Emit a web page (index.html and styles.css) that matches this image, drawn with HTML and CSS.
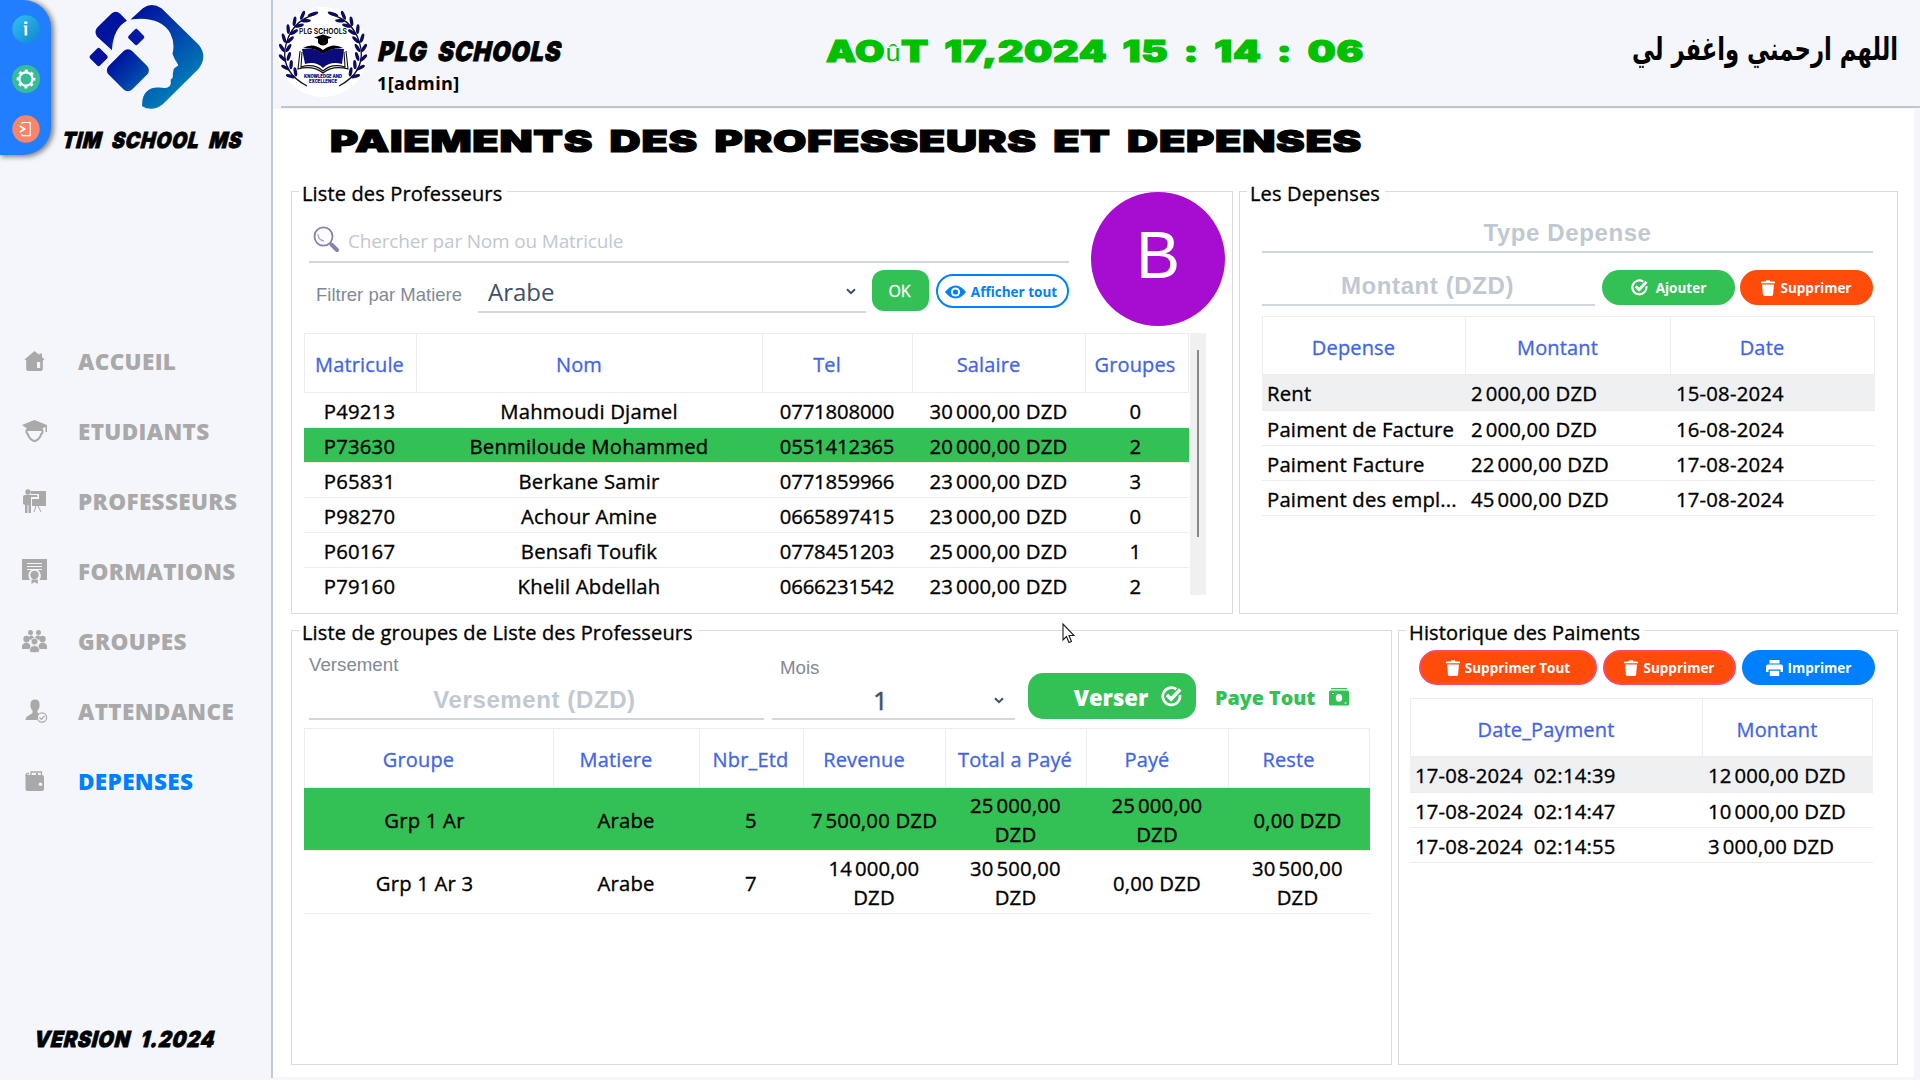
FILE: index.html
```html
<!DOCTYPE html>
<html lang="fr">
<head>
<meta charset="utf-8">
<title>Paiements des professeurs et depenses</title>
<link rel="stylesheet" href="styles.css">
</head>
<body>
<svg class="defs" width="0" height="0">
  <defs>
    <symbol id="trash" viewBox="0 0 14 16"><path fill="#fff" d="M0 2.2Q0 1.5 1 1.5H4.6L5.2.3H8.8L9.4 1.5H13Q14 1.5 14 2.2V3.2H0ZM1 4.4H13L12.1 14.6Q12 16 10.8 16H3.2Q2 16 1.9 14.6Z"/></symbol>
    <symbol id="check" viewBox="0 0 20 20"><path fill="none" stroke="#fff" stroke-width="2.6" d="M14.5 3A8.2 8.2 0 1 0 18 8.5"/><path fill="none" stroke="#fff" stroke-width="3.4" d="M5.6 8.6L9.6 12.6L18.2 3.2"/></symbol>
    <symbol id="chev" viewBox="0 0 10 7"><path fill="none" stroke="#3e5068" stroke-width="2" d="M1 1.2L5 5.2L9 1.2"/></symbol>
  </defs>
</svg>
<div class="app">
  <aside class="sidebar">
    <div class="brand">
      <div class="dock">
        <svg width="28" height="28" viewBox="0 0 28 28"><defs><linearGradient id="gi" x1="0" y1="0" x2="1" y2="1"><stop offset="0" stop-color="#33c1f2"/><stop offset="1" stop-color="#0f86cd"/></linearGradient></defs><circle cx="14" cy="14" r="13.7" fill="url(#gi)"/><path fill="#fff" d="M12.3 6.5h3v2.6h-3zM11.8 10.5h3.4v10h-2.6v-8.6h-.8z"/></svg>
        <svg width="28" height="28" viewBox="0 0 28 28"><circle cx="14" cy="14" r="14" fill="#37bc9b"/><circle cx="14" cy="14" r="6.6" fill="none" stroke="#fff" stroke-width="2.2"/><circle cx="14" cy="14" r="8.2" fill="none" stroke="#fff" stroke-width="2.4" stroke-dasharray="3 3.44" stroke-dashoffset="1.5"/></svg>
        <svg width="28" height="28" viewBox="0 0 28 28"><circle cx="14" cy="14" r="13.7" fill="#fc8468"/><path fill="none" stroke="#fff" stroke-width="1.2" d="M10 9V7.5H18.2V20.7H10V19"/><path fill="none" stroke="#fff" stroke-width="1.7" d="M8 11L12.5 14L8 17"/></svg>
      </div>
      <div class="brand-id">
        <svg class="brand-logo" width="118" height="109" viewBox="265 5 355 327"><defs><linearGradient id="lg" gradientUnits="userSpaceOnUse" x1="370" y1="70" x2="540" y2="270"><stop offset="0" stop-color="#00139f"/><stop offset="1" stop-color="#007ab8"/></linearGradient></defs>
          <g fill="url(#lg)"><path d="M393 57L430 23Q456 4 486 23L598 133Q626 168 598 205L490 312Q458 336 428 318Q426 290 440 275Q455 260 480 262Q512 268 514 250L514 238Q522 235 520 222L523 205L537 195Q524 175 519 160Q528 130 512 97Q480 45 393 57Z"/><path d="M292 82L335 40Q348 28 362 40L382 61Q340 85 337 150L292 108Q283 95 292 82Z"/></g>
          <rect x="391" y="91" width="38" height="38" rx="6" fill="#0519a2" transform="rotate(45 410 110)"/>
          <rect x="276" y="149" width="42" height="42" rx="6" fill="#00139f" transform="rotate(45 297 170)"/>
          <defs><linearGradient id="ld" x1="0" y1="0" x2="1" y2="0"><stop offset="0" stop-color="#00139f"/><stop offset="1" stop-color="#0050ad"/></linearGradient></defs>
          <rect x="335" y="160" width="100" height="100" rx="18" fill="url(#ld)" transform="rotate(45 385 210)"/></svg>
        <svg class="display" width="184" height="28" viewBox="0 0 184 28"><text class="slant" x="4" y="20" transform="skewX(-14)" textLength="180" lengthAdjust="spacingAndGlyphs">TIM SCHOOL MS</text></svg>
      </div>
    </div>
    <nav class="nav">
      <a><svg viewBox="0 0 26 26"><path d="M2.5 11.5L12.5 3L17.5 7V5.5H20V9L22.5 11.5L20.8 12.6V21Q20.8 23 19 23H6Q4.200 23 4.200 21V12.600Z"/><path fill="#f4f6fb" d="M15 14h3.200v6H15z"/></svg>ACCUEIL</a>
      <a><svg viewBox="0 0 26 26"><path d="M0 7L12.500 2L25 7V14H23.500V9L20 10.500V13H5V10.500Z"/><path fill="none" stroke="#a9a9a9" stroke-width="2" d="M6 11Q4 12 4.500 14.500Q6 16 7 19Q12.500 27 18 19Q19 16 20.500 14.500Q21 12 19 11"/></svg>ETUDIANTS</a>
      <a><svg viewBox="0 0 26 26"><circle cx="6" cy="4" r="2.700"/><path d="M1 9Q1 7 3 7H14Q16 7 15.500 9H9V25H6.500V17H5.500V25H3V17L1 16Z"/><path d="M9 3H24V18H10V11H17V6H9Z"/><path fill="none" stroke="#a9a9a9" d="M14 18L12 24M16 18L19 24"/></svg>PROFESSEURS</a>
      <a><svg viewBox="0 0 26 26"><path d="M0 1H25V22H17.500A6 6 0 1 0 8 22H0Z"/><path stroke="#f4f6fb" d="M5 5.500H20M5 8.500H20M5 11.500H20"/><circle cx="12.500" cy="17" r="6" fill="#f4f6fb"/><circle cx="12.500" cy="17" r="4.200"/><path d="M9.500 21.500H15.800V26L12.600 24L9.500 26Z"/></svg>FORMATIONS</a>
      <a><svg viewBox="0 0 26 26"><circle cx="8.500" cy="4.500" r="2.500"/><circle cx="16.500" cy="4.500" r="2.500"/><path d="M6 10L8.500 7.500H10L12.500 10L15 7.500H17L19 10L16 12H9Z"/><circle cx="4.500" cy="11" r="3.200"/><circle cx="20.500" cy="11" r="3.200"/><path d="M0 21V18Q1 14.500 4.500 14.500Q8 15 8.500 18V21ZM16.500 21V18Q17.500 14.500 20.500 14.500Q24 14.500 25 18V21Z"/><g stroke="#f4f6fb" stroke-width=".8"><circle cx="12.500" cy="13.500" r="3.400"/><path d="M7.500 24V21.500Q8 17.500 12.500 17.500Q17 17.500 17.500 21.500V24Q12.500 25.500 7.500 24Z"/></g></svg>GROUPES</a>
      <a><svg viewBox="0 0 26 26"><path d="M8.500 6Q8.500 1.500 13 1.500Q17.500 1.500 17.500 6Q18 10 15.500 12.500V14.500L17 16Q14.500 18 15 22H3.500Q4 18.500 6 18L10.500 15V12.500Q8 10 8.500 6Z"/><circle cx="20" cy="19.500" r="4.600" fill="none" stroke="#a9a9a9" stroke-width="1.200"/><path fill="none" stroke="#a9a9a9" stroke-width="1.300" d="M17.500 19.500L19.500 21.300L22.500 17.800"/></svg>ATTENDANCE</a>
      <a class="on"><svg viewBox="0 0 26 26"><path d="M3.500 7H20Q22 7 22 9V21Q22 23 20 23H5.500Q3.500 23 3.500 21Z"/><path fill="none" stroke="#a9a9a9" stroke-width="1.300" d="M4.200 8V6.500Q4.200 5.500 6 5.500H7M9 8V4H19.500V8"/><path d="M14 5h2v3h-2z"/><circle cx="18.500" cy="16.200" r="1.800" fill="#f4f6fb"/></svg>DEPENSES</a>
    </nav>
    <svg class="display version" width="190" height="28" viewBox="0 0 190 28"><text class="slant" x="6" y="20" transform="skewX(-14)" textLength="181" lengthAdjust="spacingAndGlyphs">VERSION 1.2024</text></svg>
  </aside>

  <main class="main">
    <header class="top">
      <svg class="crest" width="92" height="92" viewBox="-1 -1 92 92">
        <defs><g id="pair"><ellipse cx="4" cy="41" rx="1.700" ry="4.800" transform="rotate(-32 4 41)" fill="#0b0b66"/><ellipse cx="10.500" cy="41" rx="1.700" ry="4.600" transform="rotate(32 10.500 41)" fill="#0b0b66"/></g>
        <g id="branch"><path fill="none" stroke="#111" stroke-width="1.300" d="M29 79Q4 66 7 42Q12 14 38 7"/><use href="#pair" transform="rotate(-42 45 44)"/><use href="#pair" transform="rotate(-28 45 44)"/><use href="#pair" transform="rotate(-14 45 44)"/><use href="#pair"/><use href="#pair" transform="rotate(14 45 44)"/><use href="#pair" transform="rotate(28 45 44)"/><use href="#pair" transform="rotate(42 45 44)"/><use href="#pair" transform="rotate(56 45 44)"/><ellipse cx="35" cy="7" rx="5.500" ry="1.700" fill="#0b0b66" transform="rotate(-18 35 7)"/></g></defs>
        <circle cx="45" cy="45" r="45" fill="#fff"/>
        <use href="#branch"/><use href="#branch" transform="matrix(-1 0 0 1 90 0)"/>
        <text x="21" y="27" font-size="7.500" textLength="48" lengthAdjust="spacingAndGlyphs" class="crest-t">PLG SCHOOLS</text>
        <path d="M36 30.500L45 27.500L54 30.500L45 33.500ZM40 32H50V36Q45 41 40 36Z"/>
        <path d="M25 41Q35 35 45 43Q55 35 65 41Q54 40 45 47Q36 40 25 41Z"/>
        <path fill="none" stroke="#111" stroke-width="1.100" d="M22 44L20 62Q35 58 45 66Q55 58 70 62L68 44M24 45L23 60Q36 56 45 64Q54 56 67 60L66 45"/>
        <path fill="#0b0b7a" d="M24 42Q37 40 45 47Q53 40 66 42L64 57Q52 54 45 61Q38 54 27 57Z"/>
        <text x="26" y="70.500" font-size="4.600" textLength="38" lengthAdjust="spacingAndGlyphs" class="crest-b">KNOWLEDGE AND</text>
        <text x="31" y="75.500" font-size="4.600" textLength="28" lengthAdjust="spacingAndGlyphs" class="crest-b">EXCELLENCE</text>
      </svg>
      <div class="school">
        <svg class="display" width="192" height="30" viewBox="0 0 192 30"><text class="slant big" x="5" y="23" transform="skewX(-12)" textLength="183" lengthAdjust="spacingAndGlyphs">PLG SCHOOLS</text></svg>
        <span class="user">1[admin]</span>
      </div>
      <svg class="display clock" width="540" height="36" viewBox="0 0 540 36"><g fill="#00c000"><text class="wide green" x="0" y="29" textLength="59" lengthAdjust="spacingAndGlyphs">AO</text><text class="thin" x="59.500" y="28" textLength="15" lengthAdjust="spacingAndGlyphs">û</text><text class="wide green" x="75" y="29" textLength="463" lengthAdjust="spacingAndGlyphs">T 17,2024 15 : 14 : 06</text></g></svg>
      <svg class="display prayer" width="276" height="84" viewBox="0 0 276 84"><text class="arabic" x="270" y="52" direction="rtl" textLength="266" lengthAdjust="spacingAndGlyphs">اللهم ارحمني واغفر لي</text></svg>
    </header>
    <section class="page">
      <h1><svg class="display" width="1036" height="34" viewBox="0 0 1036 34"><text class="wide" x="0" y="28" textLength="1032" lengthAdjust="spacingAndGlyphs">PAIEMENTS DES PROFESSEURS ET DEPENSES</text></svg></h1>
      <div class="row r1">
        <section class="panel profs">
          <h2>Liste des Professeurs</h2>
          <div class="finder">
            <div class="finder-l">
              <div class="search"><svg width="27" height="27" viewBox="0 0 27 27"><ellipse cx="10.500" cy="10.500" rx="9" ry="9.200" fill="#fdfdff" stroke="#8783a8" stroke-width="1.800"/><path fill="none" stroke="#a9a6c4" stroke-width="1.300" d="M5 8Q5 14 11 15"/><path stroke="#8783a8" stroke-width="4" stroke-linecap="round" d="M18.500 18.500L24 24"/></svg><span>Chercher par Nom ou Matricule</span></div>
              <div class="filter">
                <label>Filtrer par Matiere</label>
                <div class="select sel-m"><span>Arabe</span><svg width="10" height="7"><use href="#chev"/></svg></div>
                <button class="ok">OK</button>
                <button class="pill line"><svg width="21" height="14" viewBox="0 0 21 14"><path fill="#0080ff" d="M0 7Q5 .5 10.500 .5Q16 .5 21 7Q16 13.500 10.500 13.500Q5 13.500 0 7Z"/><circle cx="10.500" cy="7" r="4.600" fill="#fff"/><circle cx="10.500" cy="7" r="2.600" fill="#0080ff"/></svg>Afficher tout</button>
              </div>
            </div>
            <div class="avatar">B</div>
          </div>
          <div class="scroll">
            <table class="t1">
              <colgroup><col style="width:113px"><col style="width:346px"><col style="width:150px"><col style="width:173px"><col style="width:103px"></colgroup>
              <tr><th>Matricule</th><th class="s">Nom</th><th class="s">Tel</th><th class="s">Salaire</th><th>Groupes</th></tr>
              <tr><td>P49213</td><td>Mahmoudi Djamel</td><td class="tel">0771808000</td><td>30&#8239;000,00 DZD</td><td>0</td></tr>
              <tr class="sel"><td>P73630</td><td>Benmiloude Mohammed</td><td class="tel">0551412365</td><td>20&#8239;000,00 DZD</td><td>2</td></tr>
              <tr><td>P65831</td><td>Berkane Samir</td><td class="tel">0771859966</td><td>23&#8239;000,00 DZD</td><td>3</td></tr>
              <tr><td>P98270</td><td>Achour Amine</td><td class="tel">0665897415</td><td>23&#8239;000,00 DZD</td><td>0</td></tr>
              <tr><td>P60167</td><td>Bensafi Toufik</td><td class="tel">0778451203</td><td>25&#8239;000,00 DZD</td><td>1</td></tr>
              <tr class="last"><td>P79160</td><td>Khelil Abdellah</td><td class="tel">0666231542</td><td>23&#8239;000,00 DZD</td><td>2</td></tr>
            </table>
            <div class="bar"><i></i></div>
          </div>
        </section>
        <section class="panel costs">
          <h2>Les Depenses</h2>
          <div class="field f-type">Type Depense</div>
          <div class="addrow">
            <div class="field f-amt">Montant (DZD)</div>
            <button class="pill green b-add"><svg width="17" height="17"><use href="#check"/></svg>Ajouter</button>
            <button class="pill red b-del"><svg width="14" height="16"><use href="#trash"/></svg>Supprimer</button>
          </div>
          <table class="t2 left">
            <colgroup><col style="width:204px"><col style="width:205px"><col style="width:204px"></colgroup>
            <tr><th class="s">Depense</th><th class="s">Montant</th><th class="s">Date</th></tr>
            <tr class="gray"><td>Rent</td><td>2&#8239;000,00 DZD</td><td>15-08-2024</td></tr>
            <tr><td>Paiment de Facture</td><td>2&#8239;000,00 DZD</td><td>16-08-2024</td></tr>
            <tr><td>Paiment Facture</td><td>22&#8239;000,00 DZD</td><td>17-08-2024</td></tr>
            <tr><td>Paiment des empl...</td><td>45&#8239;000,00 DZD</td><td>17-08-2024</td></tr>
          </table>
        </section>
      </div>
      <div class="row r2">
        <section class="panel groups">
          <h2>Liste de groupes de Liste des Professeurs</h2>
          <div class="pay">
            <div class="pay-a"><label>Versement</label><div class="field">Versement (DZD)</div></div>
            <div class="pay-m"><label>Mois</label><div class="select"><span>1</span><svg width="10" height="7"><use href="#chev"/></svg></div></div>
            <button class="verser"><span>Verser</span><svg width="21" height="21"><use href="#check"/></svg></button>
            <button class="all">Paye Tout<svg width="20" height="18" viewBox="0 0 20 18"><path fill="#33c156" d="M2 0H18V1.300H2ZM0 4Q0 2.500 1.500 2.500H18.500Q20 2.500 20 4V16Q20 17.500 18.500 17.500H1.500Q0 17.500 0 16Z"/><ellipse cx="10" cy="9.800" rx="3.200" ry="3.900" fill="#fff"/><path stroke="#fff" d="M3 5.500H5M15.500 15H17.500"/></svg></button>
          </div>
          <table class="t3">
            <colgroup><col style="width:250px"><col style="width:146px"><col style="width:104px"><col style="width:142px"><col style="width:141px"><col style="width:142px"><col style="width:141px"></colgroup>
            <tr><th class="s">Groupe</th><th class="s">Matiere</th><th>Nbr_Etd</th><th class="s">Revenue</th><th>Total a Payé</th><th class="s">Payé</th><th class="s">Reste</th></tr>
            <tr class="sel"><td class="g">Grp 1 Ar</td><td>Arabe</td><td>5</td><td>7&#8239;500,00 DZD</td><td>25&#8239;000,00<br>DZD</td><td>25&#8239;000,00<br>DZD</td><td>0,00 DZD</td></tr>
            <tr><td class="g">Grp 1 Ar 3</td><td>Arabe</td><td>7</td><td>14&#8239;000,00<br>DZD</td><td>30&#8239;500,00<br>DZD</td><td>0,00 DZD</td><td>30&#8239;500,00<br>DZD</td></tr>
          </table>
        </section>
        <section class="panel history">
          <h2>Historique des Paiments</h2>
          <div class="actions">
            <button class="pill red rim b-all"><svg width="14" height="16"><use href="#trash"/></svg>Supprimer Tout</button>
            <button class="pill red rim"><svg width="14" height="16"><use href="#trash"/></svg>Supprimer</button>
            <button class="pill blue"><svg width="17" height="16" viewBox="0 0 17 16"><path fill="#fff" d="M3.500 0H13.500V3.500H3.500ZM2 4.500H15Q17 4.500 17 6.500V12H14.500V9.500H2.500V12H0V6.500Q0 4.500 2 4.500ZM3.800 10.800H13.200V16H3.800Z"/></svg>Imprimer</button>
          </div>
          <table class="t4 left">
            <colgroup><col style="width:293px"><col style="width:170px"></colgroup>
            <tr><th class="s">Date_Payment</th><th class="s">Montant</th></tr>
            <tr class="gray"><td>17-08-2024&nbsp; 02:14:39</td><td>12&#8239;000,00 DZD</td></tr>
            <tr><td>17-08-2024&nbsp; 02:14:47</td><td>10&#8239;000,00 DZD</td></tr>
            <tr><td>17-08-2024&nbsp; 02:14:55</td><td>3&#8239;000,00 DZD</td></tr>
          </table>
        </section>
      </div>
    </section>
  </main>
</div>
<svg class="cursor" width="14" height="22" viewBox="0 0 14 22"><path fill="#fff" stroke="#1a1a2a" stroke-width="1.100" d="M1 1V17L4.500 13.500L7 19.500L9.500 18.500L7 12.500H12Z"/></svg>
</body>
</html>
```
FILE: styles.css
```css
* { box-sizing: border-box; }
body { margin: 0; background: #f4f6fb; font-family: "Open Sans", "Noto Sans", sans-serif; font-size: 20px; color: #000; overflow: hidden; }
.defs { display: block; }
button { border: 0; margin: 0; padding: 0; font-family: inherit; color: #fff; display: flex; align-items: center; justify-content: center; flex: none; white-space: nowrap; }
svg { flex: none; display: block; }
.app { display: flex; width: 1920px; height: 1080px; }

.sidebar { width: 273px; height: 1078px; border-right: 2px solid #c0cad6; display: flex; flex-direction: column; }
.brand { display: flex; height: 327px; }
.dock { width: 51px; height: 155px; background: #207eff; border-radius: 0 28px 28px 0; box-shadow: 2px 1px 5px 1px rgba(60,60,60,.6); display: flex; flex-direction: column; align-items: center; gap: 22px; padding-top: 15px; }
.brand-logo { margin: 2px 0 0 37px; }
.brand-id .display { margin: 17px 0 0 11px; }
.display { overflow: visible; }
.slant { font: 900 22px Inter, sans-serif; stroke: #000; stroke-width: .8; letter-spacing: 1px; word-spacing: 6px; }
.slant.big { font-size: 27px; }
.wide { font: 900 30px Inter, sans-serif; stroke: #000; stroke-width: 1.2; word-spacing: 5px; letter-spacing: .5px; }
.wide.green { stroke: #00c000; }
.thin { font: 400 24px "Liberation Sans", sans-serif; }
.arabic { font: 700 32px "DejaVu Sans", sans-serif; }
.crest-t { font-family: Inter, sans-serif; font-weight: 600; }
.crest-b { font-family: Inter, sans-serif; font-weight: 900; fill: #0b0b7a; }
.nav { display: flex; flex-direction: column; height: 690px; }
.nav a { height: 70px; display: flex; align-items: center; padding: 0 0 2px 22px; gap: 30px; font-size: 22.500px; font-weight: 800; letter-spacing: .35px; color: #a9a9a9; }
.nav a svg { width: 26px; height: 26px; fill: #a9a9a9; }
.nav a.on { color: #0080ff; }
.version { margin: 10px 0 0 32px; }

.main { width: 1647px; display: flex; flex-direction: column; }
.top { height: 109px; display: flex; align-items: flex-start; position: relative; }
.top::after { content: ""; position: absolute; left: 8px; right: 0; top: 106px; height: 2px; background: #c0c6d0; }
.crest { margin: 6px 0 0 4px; }
.school { width: 192px; margin: 38px 0 0 8px; height: 60px; }
.school .user { display: block; font-size: 18px; font-weight: 700; line-height: 26px; margin-top: 2px; letter-spacing: .4px; }
.clock { margin: 33px 0 0 257px; }
.prayer { margin: 8px 0 0 262px; }

.page { width: 1641px; height: 968px; background: #fff; padding: 0 0 0 18px; }
h1 { margin: 0; height: 82px; padding: 15px 0 0 39px; font-size: 30px; }
.row { display: flex; gap: 6px; }
.r1 { height: 423px; margin-bottom: 16px; }
.r2 { height: 435px; }
.panel { border: 1px solid #d9dbde; display: flex; flex-direction: column; flex: none; }
.profs { width: 942px; }
.costs { width: 659px; }
.groups { width: 1101px; }
.history { width: 500px; }
h2 { margin: -11px 0 0 7px; height: 26px; padding: 0 5px 0 3px; background: #fff; align-self: flex-start; font-size: 20px; font-weight: 500; line-height: 26px; letter-spacing: .15px; }
h2, td { -webkit-text-stroke: .35px #000; }
th { -webkit-text-stroke: .3px #4164e8; }

.finder { display: flex; height: 126px; padding-left: 17px; }
.finder-l { width: 760px; }
.search { height: 56px; border-bottom: 2px solid #d0d6de; display: flex; padding: 19px 0 0 4px; gap: 8px; color: #c0c8d2; line-height: 31px; font-size: 19px; letter-spacing: -.18px; }
.filter { display: flex; height: 50px; align-items: flex-start; }
label { font: 18.700px "Liberation Sans", sans-serif; color: #808a96; white-space: nowrap; }
.filter label { width: 169px; padding: 21px 0 0 7px; font-size: 18.500px; }
.select { border-bottom: 2px solid #d5d8e0; color: #3e5068; display: flex; align-items: center; justify-content: space-between; }
.sel-m { width: 388px; height: 50px; padding: 9px 10px 0 10px; font-size: 24px; line-height: 30px; }
.sel-m svg { margin-bottom: 9px; }
.sel-m span { margin-bottom: 8px; position: relative; top: 4px; }
.sel-m svg { position: relative; top: 4px; }
.ok { width: 57px; height: 41px; margin: 7px 0 0 6px; border-radius: 12px; background: #33c156; font-size: 16px; -webkit-text-stroke: .3px #fff; padding-right: 2px; }
.pill { height: 35px; border-radius: 18px; font-size: 13.500px; font-weight: 700; gap: 5px; width: 133px; }
.line { width: 133px; height: 34px; margin: 11px 0 0 7px; border: 2px solid #0080ff; background: #fff; color: #0080ff; padding: 1px 3px 0 0; }
.green { background: #33c156; }
.red { background: #ff4c0a; }
.blue { background: #0080ff; }
.rim { border: 2px solid #f8486c; }
.avatar { width: 134px; height: 134px; margin: -15px 0 0 22px; border-radius: 50%; background: #a60dd1; color: #fff; font: 66px/126px "Liberation Sans", sans-serif; text-align: center; flex: none; }

table { border-collapse: separate; border-spacing: 0; table-layout: fixed; flex: none; }
th { height: 60px; border: 1px solid #ededf0; border-left-width: 0; font-weight: 500; color: #4164e8; padding: 2px 2px 0 0; letter-spacing: .15px; }
th:first-child { border-left-width: 1px; }
th.s { padding-right: 21px; }
td { height: 35px; padding: 2px 2px 0 0; text-align: center; border-bottom: 1px solid #ededf0; font-size: 20.300px; font-weight: 500; line-height: 29px; white-space: nowrap; letter-spacing: .2px; }
td.tel { letter-spacing: -.15px; padding-right: 2px; }
td:last-child, th:last-child { padding-right: 4px; }
th.s:last-child { padding-right: 21px; }
.sel td { background: #33c156; }
.gray td { background: #eff0f2; }
.left td { text-align: left; padding-left: 5px; }
.scroll { display: flex; height: 262px; margin-left: 12px; }
.t1 { width: 885px; }
.last td { border-bottom: 0; }
.bar { width: 16px; margin-left: 1px; background: #f0f0f0; padding: 17px 0 0 7px; }
.bar i { display: block; width: 2px; height: 187px; background: #888; }

.field { border-bottom: 2px solid #d0d6de; color: #c0c8d2; font: 700 24px "Liberation Sans", sans-serif; letter-spacing: .6px; text-align: center; }
.f-type { width: 611px; height: 46px; margin-left: 22px; line-height: 52px; }
.addrow { display: flex; height: 63px; padding: 17px 0 0 22px; }
.f-amt { width: 333px; height: 36px; line-height: 32px; padding-right: 2px; }
.b-add { margin-left: 7px; gap: 8px; }
.b-del { margin-left: 5px; }
.t2 { width: 613px; margin-left: 22px; }
.t2 .gray td, .t4 .gray td { height: 36px; }
.t2 th, .t4 th { height: 59px; padding-top: 4px; }

.pay { display: flex; height: 82px; padding-left: 17px; align-items: flex-start; }
.pay-a { width: 455px; height: 74px; display: flex; flex-direction: column; }
.pay-a label { height: 36px; padding-top: 8px; }
.pay-a .field { height: 38px; line-height: 36px; padding-right: 4px; }
.pay-m { width: 243px; margin-left: 8px; height: 74px; }
.pay-m label { display: block; height: 36px; padding: 11px 0 0 8px; }
.pay-m .select { height: 38px; padding: 0 11px 0 101px; font-size: 26px; font-weight: 500; -webkit-text-stroke: .5px #3e5068; }
.verser { width: 168px; height: 46px; margin: 27px 0 0 13px; border-radius: 15px; background: #33c156; font-size: 22px; font-weight: 800; gap: 13px; padding-left: 32px; }
.verser span { padding-top: 2px; }
.all { height: 34px; margin: 34px 0 0 19px; background: none; color: #33c156; font-size: 19.700px; font-weight: 800; gap: 14px; }
.t3 { width: 1066px; margin-left: 12px; }
.t3 td { height: 63px; }
.t3 td.g { padding-right: 9px; }

.actions { display: flex; gap: 6px; padding: 4px 0 0 20px; height: 52px; }
.b-all { width: 178px; }
.t4 { width: 463px; margin-left: 11px; }
.cursor { position: absolute; left: 1062px; top: 623px; }
```
